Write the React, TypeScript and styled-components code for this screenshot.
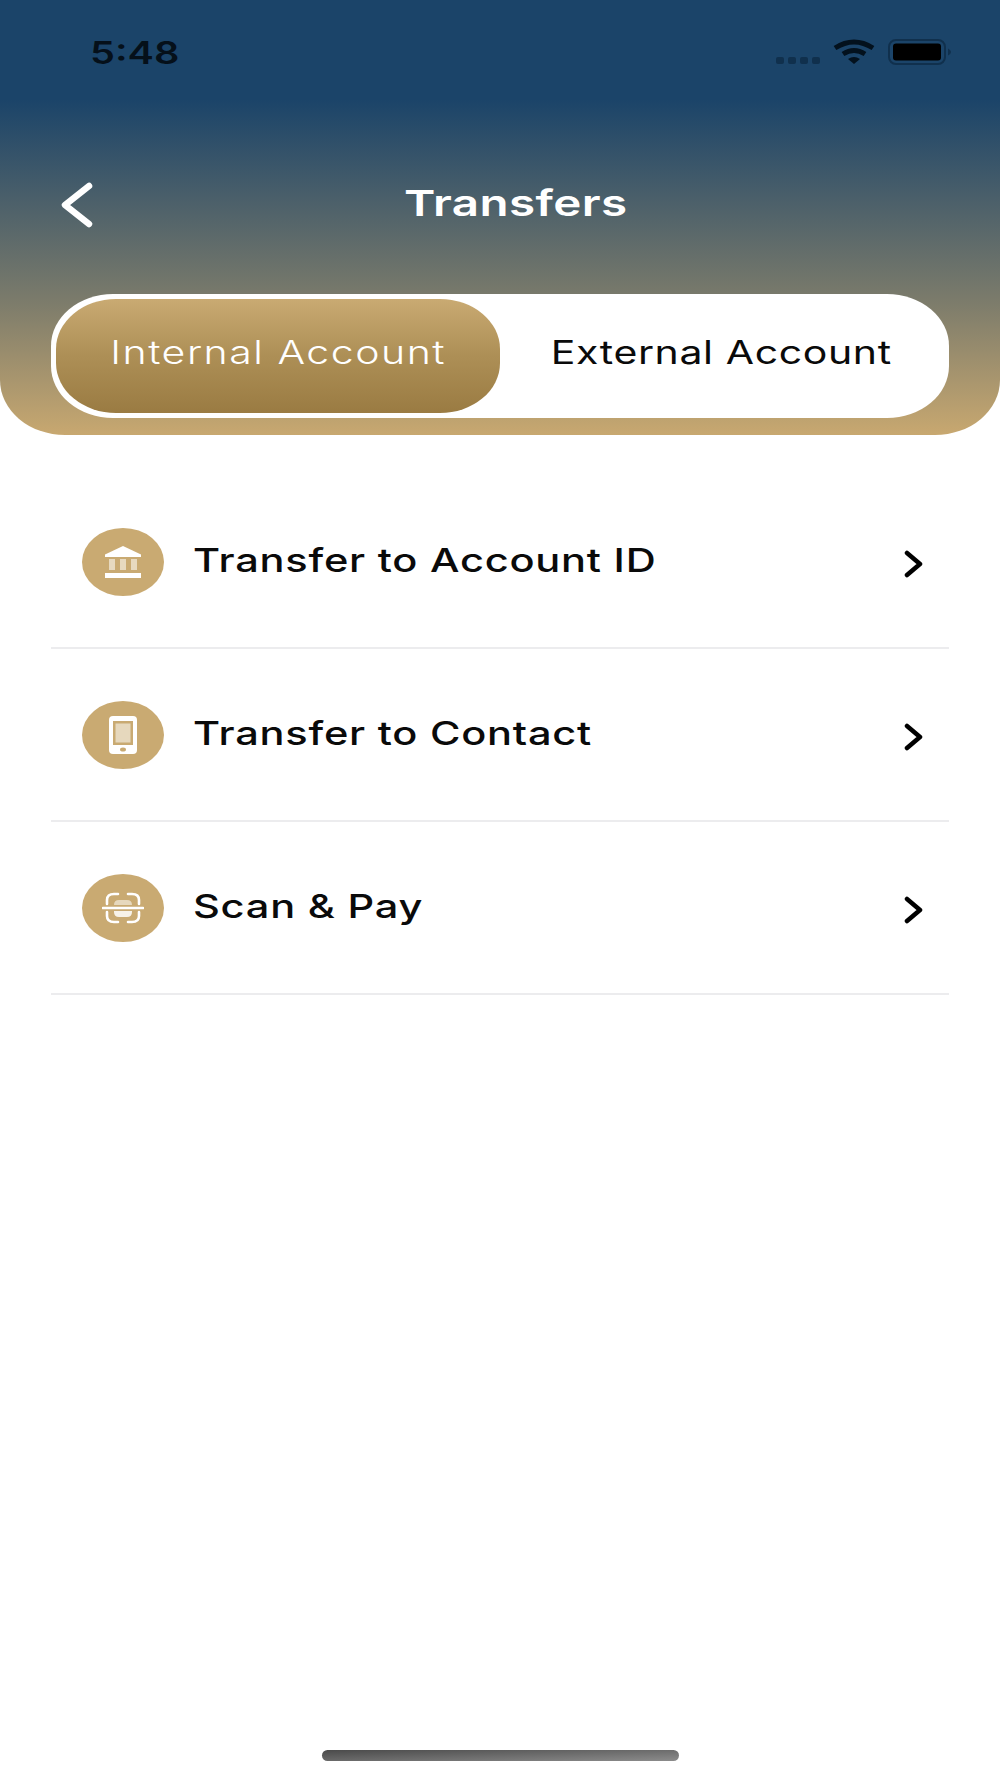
import React from "react";
import styled, { createGlobalStyle } from "styled-components";

const Global = createGlobalStyle`
  html, body { margin: 0; padding: 0; background: #fff; }
  * { box-sizing: border-box; }
`;

const Page = styled.div`
  width: 1000px;
  height: 1778px;
  display: flex;
  flex-direction: column;
  background: #fff;
  font-family: "Inter", "Liberation Sans", sans-serif;
  position: relative;
  overflow: hidden;
`;

const Header = styled.header`
  height: 435px;
  padding: 0 51px 17px;
  display: flex;
  flex-direction: column;
  border-radius: 0 0 65px 65px / 0 0 55px 55px;
  background: linear-gradient(180deg, #1b4469 0, #1b4469 100px, #7b7b6b 300px, #c8a870 435px);
`;

const StatusBar = styled.div`
  height: 104px;
  display: flex;
  align-items: center;
  justify-content: space-between;
  padding: 0 0 0 39px;
`;

const Wide = styled.span<{ $scale?: number; $origin?: string }>`
  display: inline-block;
  white-space: nowrap;
  transform: scaleX(${(p) => p.$scale ?? 1.28});
  transform-origin: ${(p) => p.$origin ?? "center"} center;
`;

const Time = styled(Wide)`
  font-weight: 600;
  font-size: 31px;
  color: #05101a;
`;

const StatusIcons = styled.div`
  display: flex;
  align-items: flex-end;
  gap: 13px;
  margin-right: -3px;
`;

const TitleRow = styled.div`
  margin-top: 49px;
  height: 100px;
  display: flex;
  align-items: center;
  justify-content: center;
  position: relative;
`;

const BackIcon = styled.svg`
  position: absolute;
  left: 9px;
  top: 29px;
`;

const Title = styled.h1`
  margin: 0 0 0 32px;
  color: #fff;
  font-size: 36px;
  font-weight: 600;
  letter-spacing: 0.3px;
`;

const Segment = styled.div`
  margin-top: auto;
  height: 124px;
  padding: 5px;
  border-radius: 62px / 52px;
  background: #fff;
  display: flex;
  align-items: stretch;
`;

const SegmentItem = styled.div<{ $active?: boolean }>`
  flex: 0 0 ${(p) => (p.$active ? "444px" : "443px")};
  padding-bottom: 7px;
  border-radius: 60px / 50px;
  display: flex;
  align-items: center;
  justify-content: center;
  font-size: 32px;
  font-weight: ${(p) => (p.$active ? 300 : 400)};
  letter-spacing: ${(p) => (p.$active ? "1.2px" : "0.5px")};
  color: ${(p) => (p.$active ? "#fff" : "#0a0a0a")};
  background: ${(p) => (p.$active ? "linear-gradient(180deg, #c9aa72 0%, #ad8f56 50%, #9a7b42 100%)" : "transparent")};
`;

const List = styled.div`
  padding: 41px 51px 0;
  display: flex;
  flex-direction: column;
`;

const Row = styled.div`
  height: 173px;
  padding: 52px 24px 0 31px;
  display: flex;
  align-items: flex-start;
  border-bottom: 2px solid #ececee;
`;

const IconBubble = styled.div`
  width: 82px;
  height: 68px;
  border-radius: 50%;
  background: #c9aa72;
  display: flex;
  align-items: center;
  justify-content: center;
  flex: none;
`;

const RowLabel = styled.div`
  margin-left: 29px;
  margin-top: 12px;
  flex: 1;
  font-size: 33px;
  font-weight: 500;
  letter-spacing: 0.6px;
  color: #0a0a0a;
`;

const Chevron = styled.svg`
  margin-top: 22px;
  flex: none;
`;

const HomeIndicator = styled.div`
  position: absolute;
  left: 322px;
  bottom: 17px;
  width: 357px;
  height: 11px;
  border-radius: 6px;
  background: linear-gradient(178deg, #4a4a4a, #8c8c8c);
`;

const BankIcon = () => (
  <svg width="36" height="32" viewBox="0 0 36 32">
    <path d="M18 0 L36 8.500 V11 H0 V8.500 Z" fill="#fff" />
    <rect x="4" y="13" width="6" height="11" fill="#fff" opacity=".55" />
    <rect x="15" y="13" width="6" height="11" fill="#fff" opacity=".55" />
    <rect x="26" y="13" width="6" height="11" fill="#fff" opacity=".55" />
    <rect x="0" y="27" width="36" height="5" fill="#fff" />
  </svg>
);

const PhoneIcon = () => (
  <svg width="28" height="38" viewBox="0 0 28 38">
    <rect width="28" height="38" rx="4" fill="#fff" />
    <rect x="4" y="5" width="20" height="24" fill="#c9aa72" />
    <rect x="6.500" y="7.500" width="15" height="19" fill="#e6d8bd" />
    <ellipse cx="14" cy="33.500" rx="3" ry="2" fill="#c9aa72" />
  </svg>
);

const ScanIcon = () => (
  <svg width="42" height="32" viewBox="0 0 42 32" fill="none" stroke="#fff" strokeWidth="2.600" strokeLinecap="round">
    <path d="M5 12 V8 Q5 2 12 2 H16" />
    <path d="M26 2 H30 Q37 2 37 8 V12" />
    <path d="M5 20 V24 Q5 30 12 30 H16" />
    <path d="M26 30 H30 Q37 30 37 24 V20" />
    <path d="M1 16 H41" />
    <path d="M12 13 Q12 8 17 8 H25 Q30 8 30 13 Z" fill="#e6d8bd" stroke="none" />
    <path d="M12 19 H30 V20 Q30 25 25 25 H17 Q12 25 12 20 Z" fill="#f7f2e8" stroke="none" />
  </svg>
);

const rows = [
  { label: "Transfer to Account ID", icon: <BankIcon /> },
  { label: "Transfer to Contact", icon: <PhoneIcon /> },
  { label: "Scan & Pay", icon: <ScanIcon /> },
];

export default function App() {
  return (
    <Page>
      <Global />
      <Header>
        <StatusBar>
          <Time $origin="left">5:48</Time>
          <StatusIcons>
            <svg width="44" height="8" viewBox="0 0 44 8" fill="#10304d">
              <rect x="0" y="0" width="8" height="7" rx="2" />
              <rect x="12" y="0" width="8" height="7" rx="2" />
              <rect x="24" y="0" width="8" height="7" rx="2" />
              <rect x="36" y="0" width="8" height="7" rx="2" />
            </svg>
            <svg width="42" height="26" viewBox="0 0 42 26" fill="none" stroke="#03111d" strokeWidth="5">
              <path d="M2 9 Q21 -3 40 9" />
              <path d="M10 15 Q21 8 32 15" />
              <path d="M15 20 L21 25 L27 20 Q21 16 15 20 Z" fill="#03111d" stroke="none" />
            </svg>
            <svg width="64" height="26" viewBox="0 0 64 26">
              <rect x="1" y="1" width="56" height="24" rx="7" fill="none" stroke="#10304d" strokeWidth="2" />
              <rect x="5" y="4.500" width="48" height="17" rx="3" fill="#000" />
              <path d="M60 9.500 Q63 11 63 13 Q63 15 60 16.500 Z" fill="#10304d" />
            </svg>
          </StatusIcons>
        </StatusBar>
        <TitleRow>
          <BackIcon width="34" height="46" viewBox="0 0 34 46" fill="none" stroke="#fff" strokeWidth="6.500" strokeLinecap="round" strokeLinejoin="round">
            <path d="M29 4 L5 23 L29 42" />
          </BackIcon>
          <Title><Wide $scale={1.32}>Transfers</Wide></Title>
        </TitleRow>
        <Segment>
          <SegmentItem $active><Wide>Internal Account</Wide></SegmentItem>
          <SegmentItem><Wide>External Account</Wide></SegmentItem>
        </Segment>
      </Header>
      <List>
        {rows.map((r) => (
          <Row key={r.label}>
            <IconBubble>{r.icon}</IconBubble>
            <RowLabel><Wide $origin="left" $scale={1.26}>{r.label}</Wide></RowLabel>
            <Chevron width="22" height="28" viewBox="0 0 22 28" fill="none" stroke="#000" strokeWidth="4.500" strokeLinecap="round" strokeLinejoin="round">
              <path d="M4 3 L17 14 L4 25" />
            </Chevron>
          </Row>
        ))}
      </List>
      <HomeIndicator />
    </Page>
  );
}
